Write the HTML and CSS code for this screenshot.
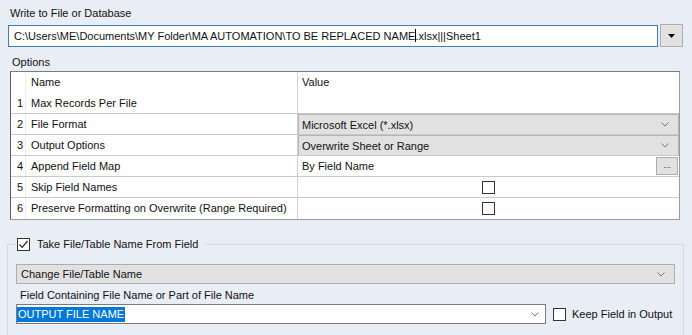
FILE: index.html
```html
<!DOCTYPE html>
<html lang="en">

<head>
    <meta charset="UTF-8" />
    <title>Write to File or Database</title>
    <link rel="stylesheet" href="styles.css">
</head>

<body>
    <div class="panel">
        <div class="label top-label">Write to File or Database</div>
        <div class="path-row">
            <div class="path-input">C:\Users\ME\Documents\MY Folder\MA AUTOMATION\TO BE REPLACED NAME<span class="caret"></span>.xlsx|||Sheet1</div>
            <div class="drop-btn">
                <svg width="7" height="4" viewBox="0 0 7 4"><path d="M0 0H7L3.5 4Z" fill="#000" /></svg>
            </div>
        </div>

        <div class="label options-label">Options</div>

        <!-- Options grid -->
        <div class="opts">
            <div class="row head">
                <div class="num"></div>
                <div class="name">Name</div>
                <div class="val">Value</div>
            </div>
            <div class="row">
                <div class="num">1</div>
                <div class="name">Max Records Per File</div>
                <div class="val"></div>
            </div>
            <div class="row">
                <div class="num">2</div>
                <div class="name">File Format</div>
                <div class="val combo">Microsoft Excel (*.xlsx)
                    <svg class="chev" width="8" height="5" viewBox="0 0 8 5"><path d="M0.5 0.5L4 4L7.5 0.5" fill="none" stroke="#777" /></svg>
                </div>
            </div>
            <div class="row">
                <div class="num">3</div>
                <div class="name">Output Options</div>
                <div class="val combo">Overwrite Sheet or Range
                    <svg class="chev" width="8" height="5" viewBox="0 0 8 5"><path d="M0.5 0.5L4 4L7.5 0.5" fill="none" stroke="#777" /></svg>
                </div>
            </div>
            <div class="row">
                <div class="num">4</div>
                <div class="name">Append Field Map</div>
                <div class="val with-btn">By Field Name <span class="dots-btn">...</span></div>
            </div>
            <div class="row">
                <div class="num">5</div>
                <div class="name">Skip Field Names</div>
                <div class="val center"><span class="check"></span></div>
            </div>
            <div class="row last">
                <div class="num">6</div>
                <div class="name">Preserve Formatting on Overwrite (Range Required)</div>
                <div class="val center"><span class="check"></span></div>
            </div>
        </div>

        <fieldset class="group">
            <legend>
                <span class="check">
                    <svg width="11" height="11" viewBox="0 0 11 11"><path d="M1.5 5.5L4.2 8.3L9.5 2" fill="none" stroke="#222" stroke-width="1.2" /></svg>
                </span>
                Take File/Table Name From Field
            </legend>
            <div class="select">Change File/Table Name
                <svg class="chev" width="8" height="5" viewBox="0 0 8 5"><path d="M0.5 0.5L4 4L7.5 0.5" fill="none" stroke="#777" /></svg>
            </div>
            <div class="label field-label">Field Containing File Name or Part of File Name</div>
            <div class="field-row">
                <div class="field-input">
                    <span class="selected">OUTPUT FILE NAME</span>
                    <svg class="chev" width="8" height="5" viewBox="0 0 8 5"><path d="M0.5 0.5L4 4L7.5 0.5" fill="none" stroke="#777" /></svg>
                </div>
                <span class="check"></span>
                <span class="keep">Keep Field in Output</span>
            </div>
        </fieldset>
    </div>
</body>

</html>
```

FILE: styles.css
```css
* {
    box-sizing: border-box;
    margin: 0;
    padding: 0;
}

html,
body {
    height: 335px;
    overflow: hidden;
}

body {
    font-family: 'Liberation Sans', Arial, sans-serif;
    font-size: 11px;
    color: #111;
    background: #e9edf6;
}

.panel {
    padding-top: 6px;
}

.label {
    line-height: 14px;
    height: 14px;
}

.top-label {
    padding-left: 10px;
}

.path-row {
    display: flex;
    align-items: center;
    margin: 4px 0 0 8px;
    gap: 2px;
}

.path-input {
    width: 650px;
    height: 22px;
    line-height: 20px;
    padding-left: 5px;
    background: #fff;
    border: 1px solid #3d7fb4;
    white-space: nowrap;
    overflow: hidden;
}

.caret {
    display: inline-block;
    width: 1px;
    height: 13px;
    background: #000;
    vertical-align: -2px;
    margin-right: -1px;
}

.drop-btn {
    width: 23px;
    height: 23px;
    background: #e1e1e1;
    border: 1px solid #adadad;
    display: flex;
    align-items: center;
    justify-content: center;
}

.options-label {
    margin-top: 8px;
    padding-left: 12px;
}

.opts {
    margin: 2px 0 0 10px;
    width: 670px;
    background: #fff;
    border: 1px solid #9a9a9a;
    border-left-color: #5e5e5e;
    border-top-color: #7c7c7c;
}

.row {
    display: grid;
    grid-template-columns: 15px 272px 1fr;
    height: 21px;
    line-height: 20px;
    border-bottom: 1px solid #c9c9c9;
}

.row.head {
    border-bottom: none;
}

.row.last {
    border-bottom: none;
}

.num {
    padding-left: 6px;
    border-right: 1px solid #ececec;
}

.name {
    padding-left: 5px;
    border-right: 1px solid #d2d2d2;
    white-space: nowrap;
}

.val {
    padding-left: 4px;
}

.combo {
    background: #e1e1e1;
    border: 1px solid #b4b4b4;
    border-bottom: none;
    padding-left: 3px;
    display: flex;
    align-items: center;
    justify-content: space-between;
    padding-right: 9px;
    line-height: 18px;
}

.with-btn {
    display: flex;
    align-items: center;
    justify-content: space-between;
    padding-right: 1px;
}

.dots-btn {
    width: 22px;
    height: 18px;
    line-height: 14px;
    background: #e1e1e1;
    border: 1px solid #adadad;
    text-align: center;
    font-size: 9px;
    color: #333;
}

.center {
    display: flex;
    align-items: center;
    justify-content: center;
    padding-left: 0;
}

.check {
    display: inline-flex;
    align-items: center;
    justify-content: center;
    width: 13px;
    height: 13px;
    border: 1px solid #333;
    background: #fff;
    flex-shrink: 0;
}

.group {
    margin: 17px 0 0 7px;
    width: 677px;
    height: 99px;
    border: 1px solid #d3d8e1;
    border-bottom: none;
    padding: 0 8px;
}

.group legend {
    display: flex;
    align-items: center;
    gap: 7px;
    height: 14px;
    line-height: 14px;
    padding: 0 7px 0 1px;
}

.select {
    margin-top: 13px;
    height: 20px;
    background: #e1e1e1;
    border: 1px solid #adadad;
    display: flex;
    align-items: center;
    justify-content: space-between;
    padding: 0 9px 0 4px;
}

.field-label {
    margin-top: 4px;
    padding-left: 4px;
}

.field-row {
    display: flex;
    align-items: center;
    margin-top: 2px;
}

.field-input {
    width: 530px;
    height: 20px;
    background: #fff;
    border: 1px solid #7a7a7a;
    display: flex;
    align-items: center;
    justify-content: space-between;
    padding: 0 6px 0 0;
}

.selected {
    background: #0078d7;
    color: #fff;
    line-height: 15px;
    padding: 0 1px;
}

.field-row .check {
    margin-left: 7px;
}

.keep {
    margin-left: 6px;
}
```
